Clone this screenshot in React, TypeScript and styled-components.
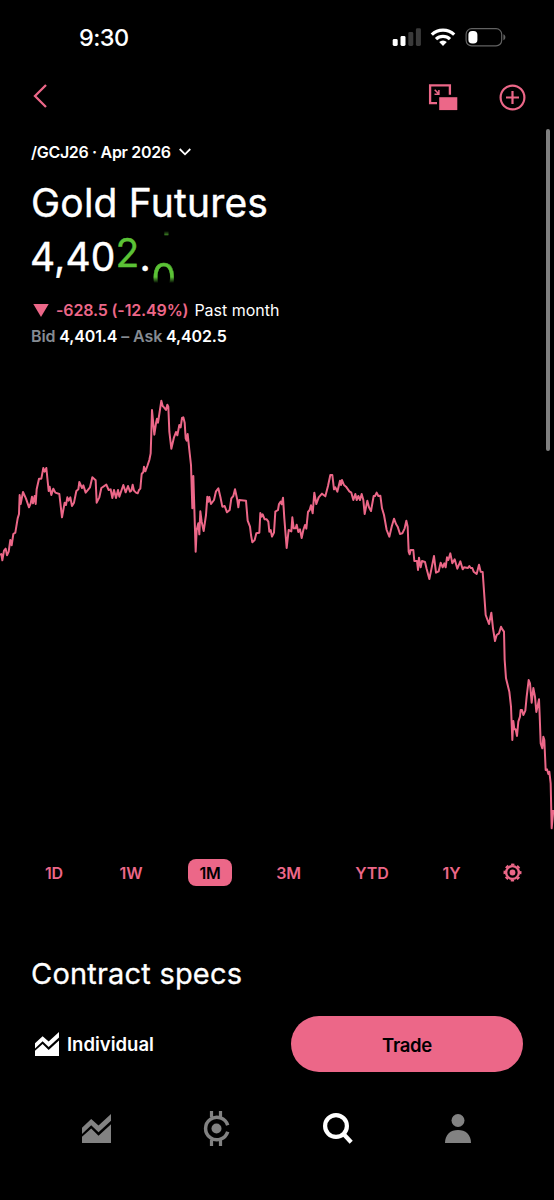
import React from "react";
import styled, { createGlobalStyle } from "styled-components";

const PINK = "#ec6788";
const GREEN = "#5bc236";

const GlobalStyle = createGlobalStyle`
  * { box-sizing: border-box; }
  body {
    margin: 0;
    background: #000;
    color: #fff;
    font-family: Inter, "Liberation Sans", sans-serif;
    overflow: hidden;
  }
  button { font-family: inherit; border: 0; background: none; padding: 0; }
  svg { display: block; flex: none; }
`;

const Screen = styled.main`
  position: relative;
  width: 554px;
  height: 1200px;
  display: flex;
  flex-direction: column;
  background: #000;
  overflow: hidden;
`;

const StatusBar = styled.div`
  height: 74px;
  display: flex;
  align-items: center;
  justify-content: space-between;
  padding: 0 48px 0 79px;
`;

const Clock = styled.span`
  font-size: 23.5px;
  line-height: 28px;
  font-weight: 550;
  letter-spacing: -0.55px;
  padding-top: 1px;
`;

const StatusIcons = styled.div`
  display: flex;
  align-items: center;
  gap: 9px;
`;

const Toolbar = styled.header`
  height: 44px;
  display: flex;
  align-items: center;
  justify-content: space-between;
  padding: 0 28px 0 33px;
`;

const ToolbarActions = styled.div`
  display: flex;
  align-items: center;
  gap: 41px;
  padding-top: 2px;
`;

const IconButton = styled.button`
  display: flex;
`;

const Quote = styled.section`
  display: flex;
  flex-direction: column;
  padding: 21px 31px 0;
`;

const ContractPicker = styled.button`
  height: 25px;
  display: flex;
  align-items: center;
  gap: 8px;
  color: #fff;
  font-size: 16px;
  font-weight: 600;
  letter-spacing: -0.32px;
  white-space: pre;
`;

const Title = styled.h1`
  margin: 14px 0 0;
  font-size: 39px;
  line-height: 49px;
  font-weight: 400;
  letter-spacing: 0.2px;
  -webkit-text-stroke: 0.4px currentColor;
  white-space: nowrap;
`;

const Price = styled.div`
  margin: 4px 0 0 -1px;
  height: 52px;
  display: flex;
  font-size: 39px;
  line-height: 52px;
  letter-spacing: 0.15px;
  -webkit-text-stroke: 0.4px currentColor;
`;

const RisingDigit = styled.span`
  color: ${GREEN};
  margin-top: -4px;
`;

const Reel = styled.span`
  height: 52px;
  width: 26px;
  display: flex;
  flex-direction: column;
  align-items: center;
  gap: 5px;
  overflow: hidden;
  color: ${GREEN};
  mask-image: linear-gradient(transparent, #000 6px, #000 46px, transparent);
`;

const ReelDigit = styled.span<{ $lift?: number }>`
  flex: none;
  height: 52px;
  margin-top: ${(p) => (p.$lift ? -p.$lift : 0)}px;
`;

const Change = styled.div`
  margin-top: 14px;
  height: 26px;
  display: flex;
  align-items: center;
  gap: 6px;
  padding-left: 2px;
  font-size: 16px;
  white-space: nowrap;
`;

const ChangeValue = styled.span`
  color: ${PINK};
  font-weight: 600;
  padding-left: 1px;
  letter-spacing: -0.15px;
`;

const Period = styled.span`
  font-weight: 400;
`;

const BidAsk = styled.div`
  height: 27px;
  line-height: 27px;
  font-size: 16px;
  font-weight: 600;
  letter-spacing: -0.12px;
`;

const Muted = styled.span`
  color: #858b92;
  font-weight: 600;
`;

const Chart = styled.svg`
  margin-top: 40px;
  width: 554px;
  height: 450px;
`;

const RangeTabs = styled.nav`
  margin-top: 19px;
  height: 27px;
  display: grid;
  grid-template-columns: 77px 77px 81px 76px 91px 68px 54px;
  justify-items: center;
  align-items: center;
  padding-left: 15.5px;
`;

const RangeTab = styled.button<{ $active?: boolean }>`
  height: 27px;
  padding: 1px 11px 0;
  border-radius: 8px;
  font-size: 16px;
  font-weight: 600;
  letter-spacing: -0.15px;
  color: ${(p) => (p.$active ? "#000" : PINK)};
  background: ${(p) => (p.$active ? PINK : "transparent")};
`;

const SectionTitle = styled.h2`
  margin: 66px 0 0;
  padding-left: 31px;
  height: 44px;
  line-height: 44px;
  font-size: 29px;
  font-weight: 400;
  letter-spacing: 0.2px;
  -webkit-text-stroke: 0.3px currentColor;
`;

const ActionBar = styled.div`
  margin-top: 20px;
  height: 56px;
  display: flex;
  align-items: center;
  justify-content: space-between;
  padding: 0 31px 0 35px;
`;

const Account = styled.button`
  display: flex;
  align-items: center;
  gap: 8px;
  color: #fff;
  font-size: 18.5px;
  font-weight: 600;
`;

const TradeButton = styled.button`
  width: 232px;
  height: 56px;
  padding-top: 1px;
  border-radius: 28px;
  background: ${PINK};
  color: #000;
  font-size: 18.5px;
  font-weight: 600;
  letter-spacing: -0.3px;
`;

const TabBar = styled.nav`
  margin-top: 28px;
  height: 56px;
  display: grid;
  grid-template-columns: repeat(4, 120.4px);
  justify-content: center;
  justify-items: center;
  align-items: center;
`;

const TabItem = styled.button<{ $active?: boolean }>`
  display: flex;
  color: ${(p) => (p.$active ? "#fff" : "#828282")};
`;

const ScrollThumb = styled.div`
  position: absolute;
  top: 129px;
  right: 4px;
  width: 4px;
  height: 322px;
  border-radius: 2px;
  background: #808080;
`;

const InvestIcon = ({ size }: { size: number }) => (
  <svg width={size} height={size} viewBox="0 0 29 29" fill="currentColor">
    <path d="M0 13.7 9.2 5l7.3 6.6L29 0v6.7L16.5 18.2 9.2 11.3 0 20Z" />
    <path d="M0 22.8 9.2 14.6l7.3 7.1L29 10.3V29H0Z" />
  </svg>
);

const GearIcon = () => (
  <svg width="19" height="19" viewBox="-9.5 -9.5 19 19" fill="none" stroke={PINK}>
    <circle r="6.4" strokeWidth="2.4" />
    <circle r="8.1" strokeWidth="1.8" strokeDasharray="3.4 2.962" strokeDashoffset="1.7" />
    <circle r="2.9" fill={PINK} stroke="none" />
  </svg>
);

/* Price line, split in sessions; points are relative to the session's origin. */
const sessions: { x: number; y: number; points: string }[] = [
  {
    x: 0,
    y: 0,
    points:
      "0,495 4,492 7,511 12,482 17,476 21,496 26,485 31,450 35,466 40,432 46,428 53,385 57,372 59,315 62,342 69,306 78,326 87,352 92,340 96,320 99,340 104,318 107,342 110,298 117,266 124,266 130,234 134,245 139,234 146,303 149,290 154,315 160,296 166,308 178,312 186,382 194,338 198,345 202,322 206,332 211,322 216,348 222,338 229,303 235,298 238,276 246,294 250,286 257,308 270,292 277,262 287,271 290,338 298,322 304,294 319,284 326,300 332,298 337,324 342,300 348,324 354,300 358,320 370,285 377,307 384,288 390,305",
  },
  {
    x: 390,
    y: 0,
    points:
      "4,302 8,284 12,302 18,308 23,310 27,300 31,296 35,252 40,246 42,230 46,244 52,228 58,210 62,190 64,130 66,60 73,134 78,100 81,86 84,98 88,72 94,32 98,48 102,52 108,60 112,44 115,50 118,125 124,176 132,142 138,126 142,136 148,105 152,112 156,84 160,82 164,98 167,145 170,152 173,132 178,180 183,225 187,355 190,258 197,485 200,420 205,400 208,433 211,364 215,395 221,423 228,375 232,320 235,335 238,321 243,342 252,330 258,304 265,295 272,325 277,350 284,348 291,367 299,360 304,325 310,318 315,298 322,330 325,352 328,330 348,332 353,392 360,410 363,435 367,457 374,450 379,430 388,428 391,369 395,380",
  },
  {
    x: 780,
    y: 180,
    points:
      "8,193 14,208 20,208 25,215 28,245 32,240 36,260 42,248 46,185 54,180 57,162 62,155 65,163 69,143 73,205 80,294 86,240 94,244 97,202 101,235 107,235 110,224 115,246 120,238 125,264 130,240 135,225 139,236 144,186 149,180 153,166 158,190 163,128 169,162 176,142 186,131 196,139 204,108 211,75 217,75 222,118 226,112 232,125 240,92 243,105 246,90 252,105 258,110 268,124 274,128 280,150 286,132 290,150 295,138 300,150 305,132 310,150 314,192 322,152 327,172 333,183 341,138 345,138 350,128 355,138 361,137 366,175 372,195 380,240 388,260 395,230 402,206 408,222 413,230",
  },
  {
    x: 1200,
    y: 330,
    points:
      "0,102 7,100 14,85 19,62 23,80 26,155 29,163 32,150 40,150 43,183 51,183 54,210 57,173 62,202 66,183 75,186 80,207 88,237 94,208 102,168 108,218 116,214 122,188 128,202 133,190 137,202 141,172 145,180 151,160 157,190 164,178 172,206 181,184 188,208 192,202 204,204 208,198 212,204 217,204 221,215 230,222 237,194 242,215 248,216 257,345 267,372 274,338 279,385 285,423 290,405 297,400 303,380 307,388 312,395",
  },
  {
    x: 1320,
    y: 810,
    points:
      "194,0 198,55 208,95 213,140 217,240 220,183 223,208 227,208 231,228 235,185 240,170 242,150 246,150 250,165 256,152 260,110 266,60 270,70 275,128 280,84 285,110 289,156 297,118 299,165 302,250 307,265 310,230 313,240 317,330 321,328 325,342 328,335 332,370 335,505 340,450",
  },
];

const pricePoints = sessions
  .flatMap((s) =>
    s.points.split(" ").map((pair) => {
      const [px, py] = pair.split(",").map(Number);
      return `${px + s.x},${py + s.y}`;
    })
  )
  .join(" ");

const ranges = ["1D", "1W", "1M", "3M", "YTD", "1Y"];

export default function App() {
  return (
    <Screen>
      <GlobalStyle />
      <StatusBar>
        <Clock>9:30</Clock>
        <StatusIcons>
          <svg width="29" height="18" viewBox="-0.7 0 29 18" fill="#fff">
            <rect x="0" y="11" width="5" height="7" rx="1.4" />
            <rect x="7.8" y="8" width="5" height="10" rx="1.4" />
            <rect x="15.6" y="4" width="5" height="14" rx="1.4" fill="#3a3a3a" />
            <rect x="23.2" y="0.3" width="5" height="17.7" rx="1.4" fill="#3a3a3a" />
          </svg>
          <svg width="26" height="18" viewBox="0 0 26 18" fill="none" stroke="#fff" strokeWidth="3.2">
            <path d="M1.8 6.7a16 16 0 0 1 22.4 0" />
            <path d="M6 11.2a10 10 0 0 1 14 0" />
            <path d="M13 18l-3.8-3.9a5.4 5.4 0 0 1 7.6 0Z" fill="#fff" stroke="none" />
          </svg>
          <svg width="41" height="19" viewBox="-0.4 0 41 19">
            <rect x="0.7" y="0.7" width="35.6" height="17.2" rx="5.6" fill="none" stroke="#626262" strokeWidth="1.2" />
            <rect x="3" y="3" width="9" height="12.6" rx="3.8" fill="#fff" />
            <path d="M38 6.3c2.6.7 2.6 5.3 0 6Z" fill="#626262" />
          </svg>
        </StatusIcons>
      </StatusBar>

      <Toolbar>
        <IconButton aria-label="Back">
          <svg width="15" height="24" viewBox="0 0 15 24" fill="none" stroke={PINK} strokeWidth="2.3">
            <path d="M13 1 2 12l11 11" />
          </svg>
        </IconButton>
        <ToolbarActions>
          <IconButton aria-label="Picture in picture">
            <svg width="30" height="27" viewBox="0 0 30 27" fill="none" stroke={PINK}>
              <path d="M9 19.1H2.1V1.3h19.8v9.4" strokeWidth="2.3" />
              <path d="M6.7 5.8l3.6 3.6M10.9 5.9v4.3H6.5" strokeWidth="1.5" />
              <path d="M11.2 13.2h18.1v12.9H11.2Z" fill={PINK} stroke="none" />
            </svg>
          </IconButton>
          <IconButton aria-label="Add to list">
            <svg width="27" height="27" viewBox="0 0 27 27" fill="none" stroke={PINK} strokeWidth="2.2">
              <circle cx="13.5" cy="13.5" r="11.9" />
              <path d="M13.5 7v13M7 13.5h13" />
            </svg>
          </IconButton>
        </ToolbarActions>
      </Toolbar>

      <Quote>
        <ContractPicker>
          /GCJ26 · Apr 2026
          <svg width="12" height="8" viewBox="0 0 12 8" fill="none" stroke="#fff" strokeWidth="1.8">
            <path d="M.7 1 6 6.3 11.3 1" />
          </svg>
        </ContractPicker>
        <Title>Gold Futures</Title>
        <Price>
          <span>4,40</span>
          <RisingDigit>2</RisingDigit>
          <span>.</span>
          <Reel>
            <ReelDigit $lift={36}>1</ReelDigit>
            <ReelDigit>0</ReelDigit>
          </Reel>
        </Price>
        <Change>
          <svg width="16" height="13" viewBox="0 0 16 13" fill={PINK}>
            <path d="M.3 0h15.4L8 13Z" />
          </svg>
          <ChangeValue>-628.5 (-12.49%)</ChangeValue>
          <Period>Past month</Period>
        </Change>
        <BidAsk>
          <Muted>Bid</Muted> 4,401.4 <Muted>– Ask</Muted> 4,402.5
        </BidAsk>
      </Quote>

      <Chart viewBox="0 0 1662 1350">
        <polyline points={pricePoints} fill="none" stroke={PINK} strokeWidth="6" strokeLinejoin="round" />
      </Chart>

      <RangeTabs>
        {ranges.map((range) => (
          <RangeTab key={range} $active={range === "1M"}>
            {range}
          </RangeTab>
        ))}
        <IconButton aria-label="Chart settings">
          <GearIcon />
        </IconButton>
      </RangeTabs>

      <SectionTitle>Contract specs</SectionTitle>

      <ActionBar>
        <Account>
          <InvestIcon size={24} />
          Individual
        </Account>
        <TradeButton>Trade</TradeButton>
      </ActionBar>

      <TabBar>
        <TabItem aria-label="Investing">
          <InvestIcon size={29} />
        </TabItem>
        <TabItem aria-label="Crypto">
          <svg width="27" height="35" viewBox="0 0 27 35" fill="none" stroke="currentColor">
            <path d="M24.7 14.2A11.3 11.3 0 1 0 24.7 20.8" strokeWidth="3.5" />
            <path d="M8.5 0v6.5M17.5 0v6.5M8.5 28.5V35M17.5 28.5V35" strokeWidth="3.2" />
            <circle cx="13.5" cy="17.5" r="5" fill="currentColor" stroke="none" />
          </svg>
        </TabItem>
        <TabItem aria-label="Search" $active>
          <svg width="31" height="31" viewBox="0 0 31 31" fill="none" stroke="currentColor">
            <circle cx="14" cy="13" r="10.9" strokeWidth="4.2" />
            <path d="M21.5 21 29.2 29.2" strokeWidth="4.2" />
          </svg>
        </TabItem>
        <TabItem aria-label="Account">
          <svg width="26" height="29" viewBox="0 0 26 29" fill="currentColor">
            <circle cx="13" cy="6.5" r="6.5" />
            <path d="M0 29C0 20.5 5.5 16 13 16s13 4.5 13 13Z" />
          </svg>
        </TabItem>
      </TabBar>
      <ScrollThumb />
    </Screen>
  );
}
